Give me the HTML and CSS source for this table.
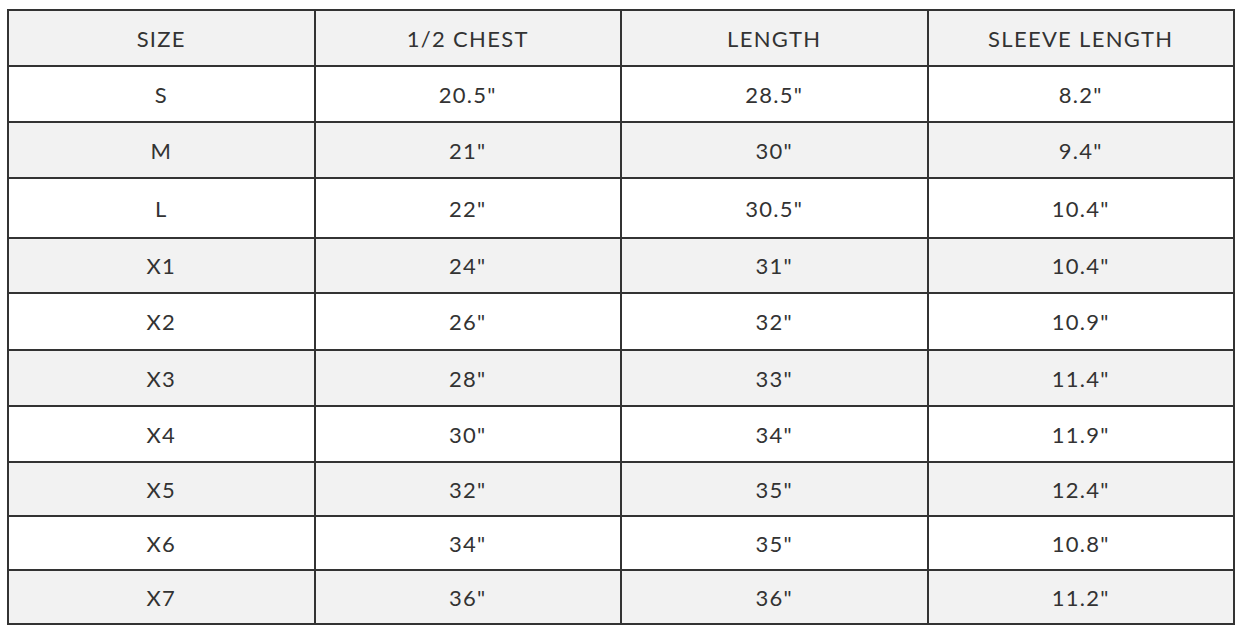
FILE: index.html
```
<!DOCTYPE html>
<html>
<head>
<meta charset="utf-8">
<link rel="stylesheet" href="styles.css">
</head>
<body>
<table class="size-table">
  <thead>
    <tr class="r56"><th>SIZE</th><th>1/2 CHEST</th><th>LENGTH</th><th>SLEEVE LENGTH</th></tr>
  </thead>
  <tbody>
    <tr class="r56"><td>S</td><td>20.5"</td><td>28.5"</td><td>8.2"</td></tr>
    <tr class="r56"><td>M</td><td>21"</td><td>30"</td><td>9.4"</td></tr>
    <tr class="r60"><td>L</td><td>22"</td><td>30.5"</td><td>10.4"</td></tr>
    <tr class="r55"><td>X1</td><td>24"</td><td>31"</td><td>10.4"</td></tr>
    <tr class="r57"><td>X2</td><td>26"</td><td>32"</td><td>10.9"</td></tr>
    <tr class="r56"><td>X3</td><td>28"</td><td>33"</td><td>11.4"</td></tr>
    <tr class="r56"><td>X4</td><td>30"</td><td>34"</td><td>11.9"</td></tr>
    <tr class="r54"><td>X5</td><td>32"</td><td>35"</td><td>12.4"</td></tr>
    <tr class="r54"><td>X6</td><td>34"</td><td>35"</td><td>10.8"</td></tr>
    <tr class="r54"><td>X7</td><td>36"</td><td>36"</td><td>11.2"</td></tr>
  </tbody>
</table>
</body>
</html>
```
FILE: styles.css
```
html, body {
  margin: 0;
  padding: 0;
  background: #ffffff;
}
body {
  padding: 9px 7px 0 7px;
  font-family: Lato, "Open Sans", sans-serif;
  color: #333333;
}
.size-table {
  width: 1228px;
  border-collapse: collapse;
  table-layout: fixed;
}
.size-table th,
.size-table td {
  border: 2px solid #333333;
  text-align: center;
  vertical-align: middle;
  font-size: 22px;
  letter-spacing: 1.3px;
  font-weight: 400;
  padding: 0;
  color: #333333;
}
.size-table thead tr,
.size-table tbody tr:nth-child(even) {
  background: #f2f2f2;
}
.size-table tbody tr:nth-child(odd) {
  background: #ffffff;
}
.r54 { height: 54px; }
.r55 { height: 55px; }
.r56 { height: 56px; }
.r57 { height: 57px; }
.r60 { height: 60px; }
```
